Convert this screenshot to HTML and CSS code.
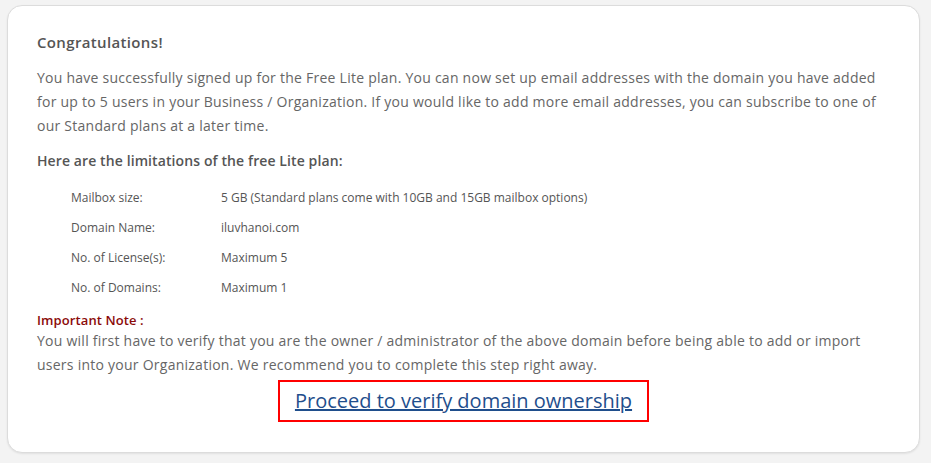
FILE: index.html
```html
<!DOCTYPE html>
<html lang="en">
<head>
    <meta charset="UTF-8">
    <meta name="viewport" content="width=device-width, initial-scale=1.0">
    <title>Free Lite plan - Signup complete</title>
    <link rel="stylesheet" href="styles.css">
</head>
<body>
    <div class="card">
        <h3 class="title">Congratulations!</h3>
        <p class="intro">You have successfully signed up for the Free Lite plan. You can now set up email addresses with the domain you have added for up to 5 users in your Business / Organization. If you would like to add more email addresses, you can subscribe to one of our Standard plans at a later time.</p>
        <p class="sub">Here are the limitations of the free Lite plan:</p>
        <table class="limits">
            <tr><td class="label">Mailbox size:</td><td>5 GB (Standard plans come with 10GB and 15GB mailbox options)</td></tr>
            <tr><td class="label">Domain Name:</td><td>iluvhanoi.com</td></tr>
            <tr><td class="label">No. of License(s):</td><td>Maximum 5</td></tr>
            <tr><td class="label">No. of Domains:</td><td>Maximum 1</td></tr>
        </table>
        <div class="note">
            <div class="note-title">Important Note :</div>
            <p>You will first have to verify that you are the owner / administrator of the above domain before being able to add or import users into your Organization. We recommend you to complete this step right away.</p>
        </div>
        <div class="action">
            <a href="#" class="verify">Proceed to verify domain ownership</a>
        </div>
    </div>
</body>
</html>
```

FILE: styles.css
```css
body { margin: 0; padding: 5px 11px 10px 7px; background: #f3f3f3; font-family: 'Open Sans', sans-serif; color: #666; }
.card { background: #fff; border: 1px solid #dcdcdc; border-radius: 15px; box-shadow: 0 1px 2px rgba(0,0,0,0.08); padding: 24px 29px 30px 29px; height: 392px; }
.title { margin: 0 0 12px; font-size: 15px; font-weight: 600; color: #555; line-height: 24px; letter-spacing: 0.35px; }
.intro { margin: 0; font-size: 14px; line-height: 24px; letter-spacing: 0.25px; }
.sub { margin: 11px 0 9px; font-size: 14px; font-weight: 600; color: #555; line-height: 24px; letter-spacing: 0.1px; }
.limits { border-collapse: collapse; margin-left: 22px; font-size: 12px; color: #555; }
.limits td { padding: 0 12px; height: 30px; }
.limits td.label { width: 126px; }
.note { margin-top: 10px; }
.note-title { font-size: 13px; font-weight: 600; color: #8b0a0a; line-height: 17px; letter-spacing: 0.1px; }
.note p { margin: 0; font-size: 14px; line-height: 24px; letter-spacing: 0.25px; }
.action { text-align: center; margin-top: 3px; }
.verify { display: inline-block; border: 2px solid #f00; padding: 5px 15px 6px 15px; font-size: 20px; line-height: 27px; color: #1f4e8c; text-decoration: underline; }
```
